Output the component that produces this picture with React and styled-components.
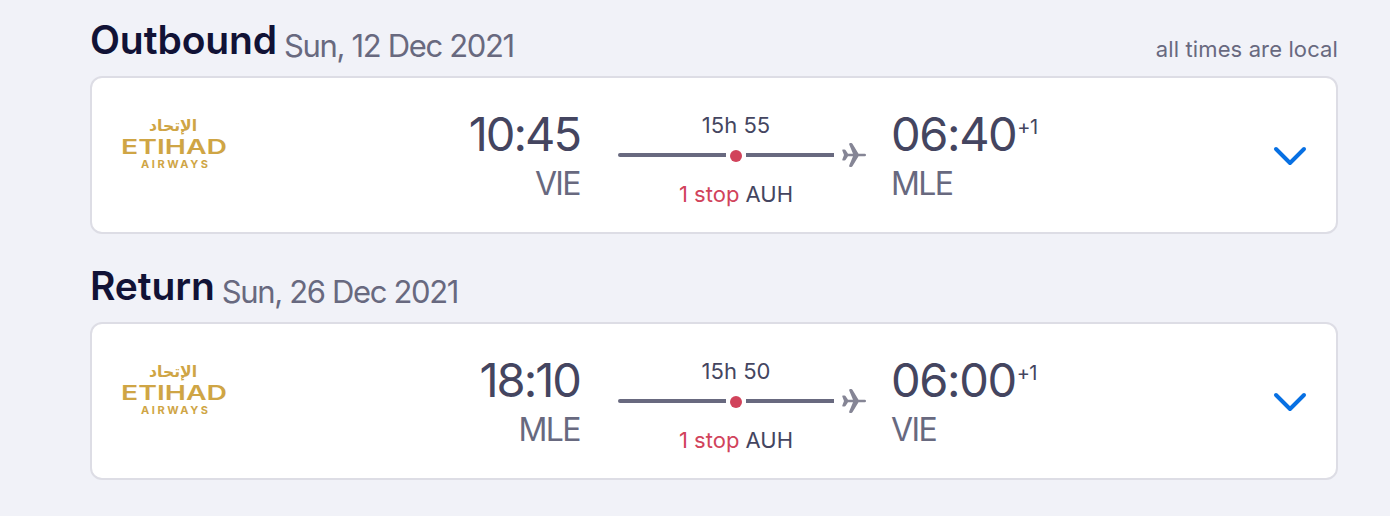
import React from "react";
import styled, { createGlobalStyle } from "styled-components";

const GlobalStyle = createGlobalStyle`
  * {
    box-sizing: border-box;
  }
  body {
    margin: 0;
    background-color: #f1f2f8;
    font-family: Inter, "Liberation Sans", sans-serif;
  }
`;
const Page = styled.main`
  height: 516px;
  padding: 10px 52px 0 90px;
  overflow: hidden;
`;
const Section = styled.section`
  margin-bottom: 22px;
`;
const Header = styled.header`
  display: flex;
  align-items: flex-start;
  height: 66px;
  white-space: nowrap;
`;
const Title = styled.h2`
  margin: 0 7px 0 0;
  font-size: 39px;
  line-height: 60px;
  font-weight: 600;
  letter-spacing: -0.1px;
  color: #111236;
`;
const DateText = styled.span`
  font-size: 31px;
  line-height: 72px;
  letter-spacing: -1.35px;
  color: #68697f;
`;
const Note = styled.span`
  margin-left: auto;
  font-size: 22px;
  line-height: 78px;
  letter-spacing: 0.12px;
  color: #68697f;
`;
const Card = styled.div`
  display: grid;
  grid-template-columns: 108px 351px 248px 1fr 36px;
  height: 158px;
  padding: 30px 28px 0 28px;
  border: 2px solid #dddde5;
  border-radius: 12px;
  background-color: white;
  white-space: nowrap;
`;
const Stop = styled.div`
  text-align: ${(props) => props.$align};
`;
const Departure = styled(Stop)`
  margin-right: -1px;
`;
const Arrival = styled(Stop)`
  padding-left: 64px;
`;
const Time = styled.div`
  font-size: 47px;
  line-height: 51px;
  letter-spacing: ${(props) => props.$spacing};
  color: #444560;
`;
const NextDay = styled.sup`
  margin-left: 1px;
  font-size: 20px;
  line-height: 1;
  letter-spacing: -0.6px;
`;
const Airport = styled.div`
  font-size: 32px;
  line-height: 50px;
  letter-spacing: -1.6px;
  color: #68697f;
`;
const Leg = styled.div`
  margin: 0 -39px 0 39px;
  text-align: center;
  font-size: 22px;
  color: #444560;
`;
const Duration = styled.div`
  width: 236px;
  line-height: 35px;
`;
const Track = styled.div`
  display: flex;
  align-items: center;
  height: 24px;
`;
const Line = styled.div`
  width: ${(props) => props.$width}px;
  height: 4px;
  border-radius: ${(props) => (props.$start ? "2px 0 0 2px" : 0)};
  background-color: #68697f;
`;
const Dot = styled.div`
  width: 12px;
  height: 12px;
  margin: 2px 4px 0;
  border-radius: 50%;
  background-color: #d1435b;
`;
const Plane = styled.svg`
  margin-left: 8px;
`;
const StopInfo = styled.div`
  width: 236px;
  line-height: 54px;
`;
const StopCount = styled.span`
  color: #d1435b;
`;
const Logo = styled.svg`
  margin-top: 6px;
`;
const Chevron = styled.svg`
  margin-top: 29px;
`;

function EtihadLogo() {
  return (
    <Logo width="108" height="60" viewBox="0 0 108 60" fill="#cfa545">
      <text x="77" y="17" direction="rtl" fontFamily="DejaVu Sans" fontSize="16" fontWeight="700" textLength="48" lengthAdjust="spacingAndGlyphs">
        الإتحاد
      </text>
      <text x="1" y="40" fontSize="19.5" fontWeight="600" textLength="106" lengthAdjust="spacingAndGlyphs">
        ETIHAD
      </text>
      <text x="21" y="54" fontSize="11" fontWeight="700" textLength="67">
        AIRWAYS
      </text>
    </Logo>
  );
}

function Flight({ title, date, note, from, to, depart, arrive, duration }) {
  return (
    <Section>
      <Header>
        <Title>{title}</Title>
        <DateText>{date}</DateText>
        {note && <Note>{note}</Note>}
      </Header>
      <Card>
        <EtihadLogo />
        <Departure $align="right">
          <Time $spacing="-2px">{depart}</Time>
          <Airport>{from}</Airport>
        </Departure>
        <Leg>
          <Duration>{duration}</Duration>
          <Track>
            <Line $width={108} $start />
            <Dot />
            <Line $width={88} />
            <Plane width="24" height="24" viewBox="0 0 24 24" fill="#858595">
              <path d="M1 6.500h1.500q.8 0 1.200.7L6 10.700h5L7.200 1.500Q6.800 0 8.200 0h1q.9 0 1.400.9l5.900 9.800H22.700a1.300 1.300 0 0 1 0 2.600H16.500l-5.900 9.800q-.5.900-1.400.9h-1q-1.400 0-1-1.500L11 13.300H6l-2.300 3.500q-.4.700-1.200.7H1q-1 0-.7-1L2 12 .3 7.500q-.3-1 .7-1z" />
            </Plane>
          </Track>
          <StopInfo>
            <StopCount>1 stop</StopCount> AUH
          </StopInfo>
        </Leg>
        <Arrival $align="left">
          <Time $spacing="-1.4px">
            {arrive}
            <NextDay>+1</NextDay>
          </Time>
          <Airport>{to}</Airport>
        </Arrival>
        <Chevron width="36" height="36" viewBox="0 0 36 36" fill="none" stroke="#0770e3" strokeWidth="4" strokeLinecap="round" strokeLinejoin="round">
          <path d="M4 12l14 14 14-14" />
        </Chevron>
      </Card>
    </Section>
  );
}

export default function App() {
  return (
    <Page>
      <GlobalStyle />
      <Flight title="Outbound" date="Sun, 12 Dec 2021" note="all times are local" from="VIE" to="MLE" depart="10:45" arrive="06:40" duration="15h 55" />
      <Flight title="Return" date="Sun, 26 Dec 2021" from="MLE" to="VIE" depart="18:10" arrive="06:00" duration="15h 50" />
    </Page>
  );
}
